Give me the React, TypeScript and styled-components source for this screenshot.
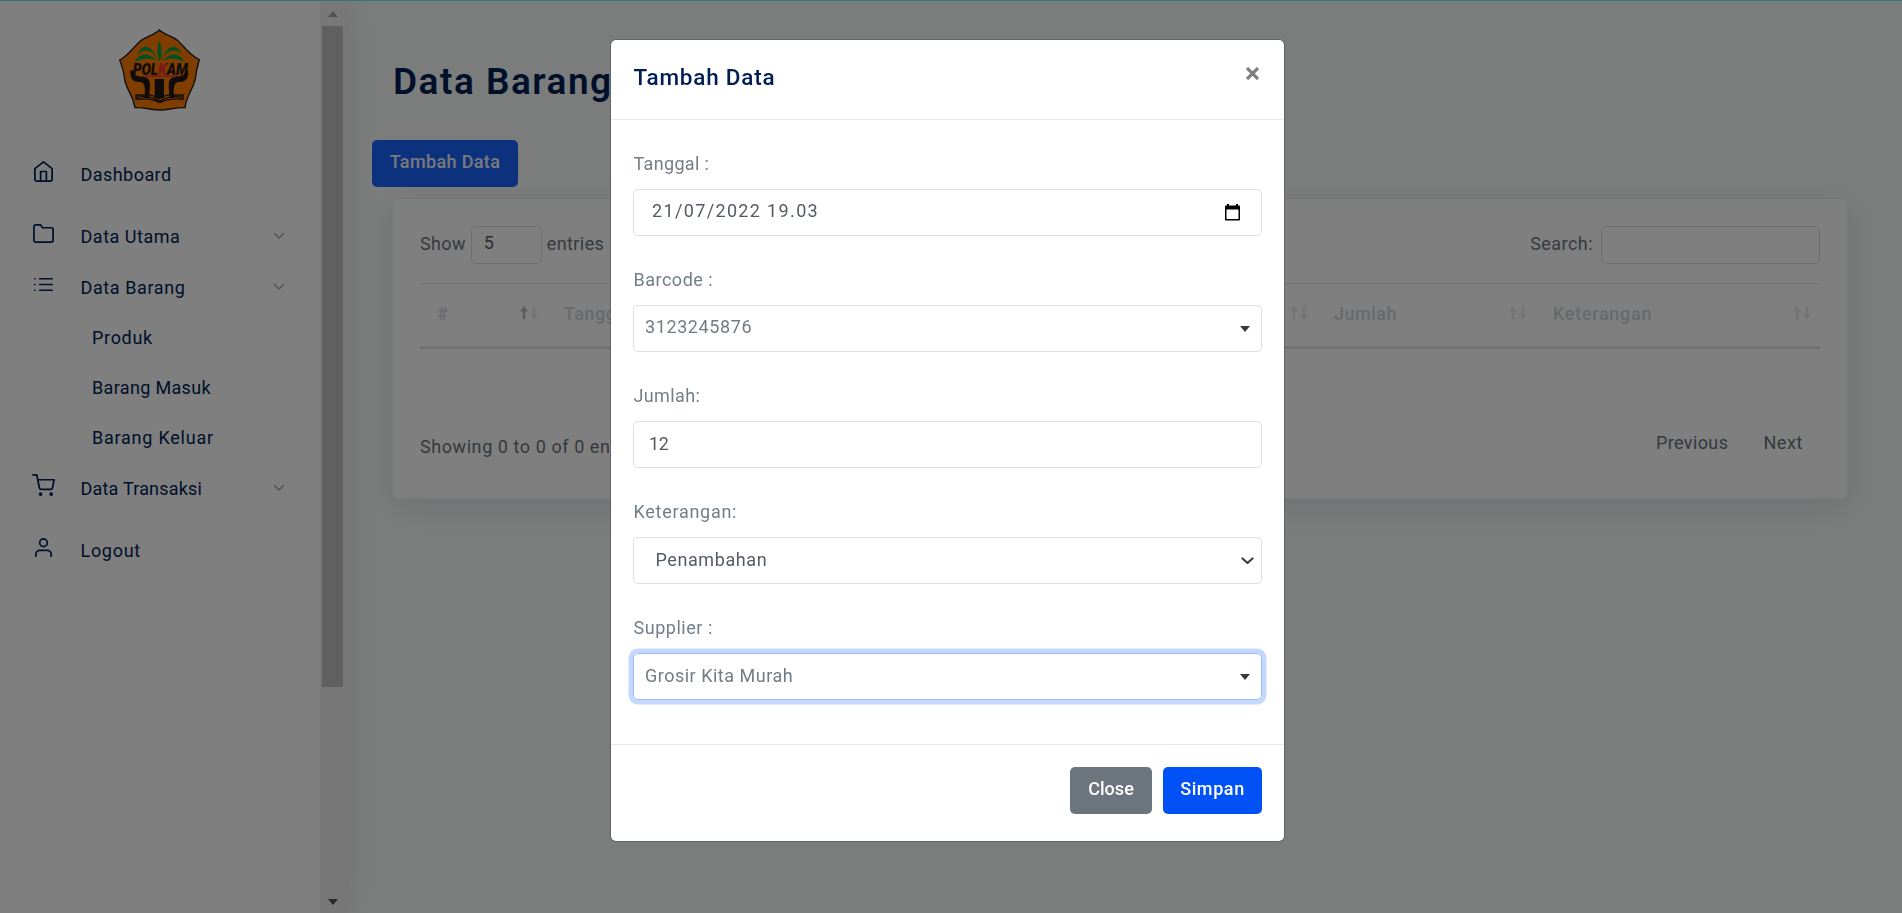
import React from 'react';
import styled, { createGlobalStyle, css } from 'styled-components';

const GlobalStyle = createGlobalStyle`
  *, *::before, *::after { box-sizing: border-box; }
  html, body { margin: 0; height: 100%; overflow: hidden; }
  body {
    font: 400 18px/24px Roboto, "Liberation Sans", sans-serif;
    color: #6c757d;
    background: #f7faf9;
  }
  h1, h2 { margin: 0; font-weight: 500; color: #001e54; }
  button { font: inherit; border: 0; padding: 0; background: none; }
`;

/* Text with its own letter spacing */
const Text = styled.span<{ $ls?: number }>`
  letter-spacing: ${p => p.$ls ?? 0.5}px;
  white-space: nowrap;
`;

const Page = styled.div`
  display: flex;
  height: 100vh;
  border-top: 1px solid #68f4fc;
`;

/* ---------- Sidebar ---------- */

const Sidebar = styled.aside`
  display: flex;
  flex: 0 0 346px;
  background: #fff;
  border-right: 1px solid #eaeaee;
  box-shadow: 0 0 32px rgba(25, 42, 70, 0.11);
`;

const SidebarBody = styled.div`
  flex: 1;
`;

const Brand = styled.div`
  height: 148px;
  padding: 28px 0 0 119px;
`;

const Nav = styled.nav`
  display: flex;
  flex-direction: column;
`;

const NavRow = styled.a<{ $gap?: boolean }>`
  display: flex;
  align-items: center;
  height: 51px;
  padding: 0 35px 0 32px;
  margin-bottom: ${p => (p.$gap ? 11 : 0)}px;
  color: #001e54;

  ${Text} { flex: 1; }
  > svg:first-child { margin: -6px 25.5px 0 0; }
`;

const SubRow = styled.a`
  display: flex;
  align-items: center;
  height: 50px;
  padding-left: 92px;
  color: #001e54;
`;

const LineSvg = styled.svg<{ $w?: number }>`
  display: block;
  flex: none;
  fill: none;
  stroke: currentColor;
  stroke-width: ${p => p.$w ?? 1.8};
  stroke-linecap: round;
  stroke-linejoin: round;
`;

const Chevron = styled(LineSvg)`
  color: #a3a8b0;
  margin-top: -2px;
`;

const Scrollbar = styled.div`
  display: flex;
  flex-direction: column;
  align-items: center;
  width: 25px;
  background: #f1f1f1;
`;

const ScrollArrow = styled.div<{ $down?: boolean }>`
  display: flex;
  justify-content: center;
  height: 25px;
  padding-top: ${p => (p.$down ? 11 : 10)}px;

  &::before {
    content: '';
    height: 6px;
    border: 5.5px solid transparent;
    ${p =>
      p.$down
        ? css`border-top: 6px solid #505050; border-bottom: 0;`
        : css`border-bottom: 6px solid #a3a3a3; border-top: 0;`}
  }
`;

const ScrollTrack = styled.div`
  flex: 1;
  &::before {
    content: '';
    display: block;
    width: 21px;
    height: 661px;
    background: #c1c1c1;
  }
`;

/* ---------- Main ---------- */

const Main = styled.main`
  flex: 1;
  padding: 57px 54px 0 47px;
`;

const Title = styled.h1`
  font-size: 37px;
  line-height: 48px;
  font-weight: 600;
`;

const Button = styled.button<{ $w: number; $bg: string }>`
  display: flex;
  justify-content: center;
  width: ${p => p.$w}px;
  height: 47px;
  padding-top: 10px;
  border-radius: 5px;
  background: ${p => p.$bg};
  color: #fff;
  font-weight: 500;
  line-height: 24px;
`;

const Toolbar = styled.div`
  margin: 34px 0 11px -21px;
  ${Button} { color: #f0f3fa; }
`;

const Card = styled.section`
  height: 301px;
  margin-left: -1px;
  padding: 27px 27px 0 27px;
  background: #fff;
  border: 1px solid #eef0f2;
  border-radius: 5px;
  box-shadow: 0 8px 32px rgba(25, 42, 70, 0.11);
`;

const Controls = styled.div`
  display: flex;
  align-items: center;
  justify-content: space-between;
  height: 37px;
`;

const Control = styled.label`
  display: flex;
  align-items: center;

  ${Text} { margin-top: -1px; }
`;

const Box = styled.span<{ $w: number }>`
  display: flex;
  align-items: center;
  width: ${p => p.$w}px;
  height: 38px;
  padding: 0 0 3px 12px;
  border: 1px solid #dcdde0;
  border-radius: 5px;
  color: #555d66;
`;

const HeadRow = styled.div`
  display: grid;
  grid-template-columns: 127px 770px 219px 1fr;
  height: 66px;
  margin-top: 20px;
  border-top: 1px solid #e2e4e8;
  border-bottom: 3px solid #dfe3e8;
`;

const HeadCell = styled.div`
  display: flex;
  justify-content: space-between;
  padding: 18px 9px 0 17px;
  color: #ced4da;
  font-weight: 500;
`;

const CardFooter = styled.div`
  display: flex;
  justify-content: space-between;
  margin-top: 82px;
  color: #69727a;
`;

const Info = styled.div`
  padding-top: 4px;
`;

const Pager = styled.div`
  display: flex;
  gap: 35px;
  padding-right: 17px;
`;

/* ---------- Modal ---------- */

const Backdrop = styled.div`
  position: fixed;
  inset: 0;
  display: flex;
  justify-content: center;
  align-items: flex-start;
  padding: 39px 7px 0 0;
  background: rgba(0, 0, 0, 0.5);
`;

const Dialog = styled.div`
  display: flex;
  flex-direction: column;
  width: 675px;
  height: 803px;
  background: #fff;
  background-clip: padding-box;
  border: 1px solid rgba(0, 0, 0, 0.2);
  border-radius: 6px;
`;

const DialogHeader = styled.header`
  display: flex;
  justify-content: space-between;
  height: 80px;
  padding: 25px 25px 0 22.5px;
  border-bottom: 1px solid #e6e8ea;
  color: #7f7f7f;
`;

const DialogTitle = styled.h2`
  font-size: 22.5px;
  line-height: 24px;
`;

const DialogBody = styled.div`
  flex: 1;
  padding: 32px 22px 0;
`;

const Field = styled.div`
  height: 116px;
`;

const Label = styled.label`
  display: block;
  height: 37px;
  padding-left: 0.5px;
  color: #737d87;
`;

const Input = styled.div<{ $left: number; $right: number; $lift?: number; $muted?: boolean; $focus?: boolean }>`
  display: flex;
  align-items: center;
  justify-content: space-between;
  height: 47px;
  padding: 0 ${p => p.$right}px 0 ${p => p.$left}px;
  border: 1px solid ${p => (p.$focus ? '#99b9fb' : '#dee0e3')};
  border-radius: 5px;
  box-shadow: ${p => (p.$focus ? '0 0 0 4.5px #c5d8fd' : 'none')};
  color: ${p => (p.$muted ? '#737c85' : '#555b62')};

  ${Text} { margin-top: -${p => p.$lift ?? 2}px; }
`;

const Caret = styled.i`
  border: 5.5px solid transparent;
  border-top: 6px solid #343a40;
  border-bottom: 0;
  margin-top: 1px;
`;

const DialogFooter = styled.footer`
  display: flex;
  justify-content: flex-end;
  gap: 11px;
  height: 97px;
  padding: 22px 22px 0;
  border-top: 1px solid #e3e8ee;
`;

/* ---------- Icons ---------- */

const navIcons = {
  home: <><path d="M3 9l9-7 9 7v11a2 2 0 0 1-2 2H5a2 2 0 0 1-2-2z" /><path d="M9 22V12h6v10" /></>,
  folder: <path d="M22 19a2 2 0 0 1-2 2H4a2 2 0 0 1-2-2V5a2 2 0 0 1 2-2h5l2 3h9a2 2 0 0 1 2 2z" />,
  list: <path d="M8 6h13M8 12h13M8 18h13M3 6h.01M3 12h.01M3 18h.01" />,
  cart: <><circle cx="9" cy="21" r="1" /><circle cx="20" cy="21" r="1" /><path d="M1 1h4l2.68 13.39a2 2 0 0 0 2 1.61h9.72a2 2 0 0 0 2-1.61L23 6H6" /></>,
  user: <><path d="M20 21v-2a4 4 0 0 0-4-4H8a4 4 0 0 0-4 4v2" /><circle cx="12" cy="7" r="4" /></>,
};

const NavIcon = ({ name }: { name: keyof typeof navIcons }) => (
  <LineSvg width="23" height="23" viewBox="0 0 24 24">{navIcons[name]}</LineSvg>
);

const Down = () => (
  <Chevron $w={1.5} width="12" height="8" viewBox="0 0 12 8"><path d="M1.500 1.500 6 6l4.500-4.500" /></Chevron>
);

const SortSvg = styled.svg`
  margin-top: 4px;
`;

const SortIcon = ({ asc }: { asc?: boolean }) => (
  <SortSvg width="18" height="14" viewBox="0 0 18 14">
    <path d="M4 0 8 5.500H5.200V13H2.800V5.500H0z" fill={asc ? '#b4b9be' : '#e5e6e7'} />
    <path d="M14 13.500 10 8h2.800V.5h2.400V8H18z" fill="#e5e6e7" />
  </SortSvg>
);

const CalendarIcon = () => (
  <svg width="15" height="17" viewBox="0 0 15 17">
    <path d="M2 0h2v1.500h7V0h2v1.500h1.200a.8.8 0 0 1 .8.8V15.700a.8.8 0 0 1-.8.8H.8a.8.8 0 0 1-.8-.8V2.300a.8.8 0 0 1 .8-.8H2zM1.500 5.500V15h12V5.500z" fill="#000" fillRule="evenodd" />
  </svg>
);

const Wordmark = styled.text`
  font: italic 900 50px Roboto, sans-serif;
`;

const Logo = () => (
  <svg width="81" height="82" viewBox="57 28 243 246">
    <defs>
      {/* The K of the wordmark is red, the rest near-black */}
      <linearGradient id="wordmark" gradientUnits="userSpaceOnUse" x1="98" x2="264" y1="150" y2="150">
        <stop offset="0.44" stopColor="#1c1614" />
        <stop offset="0.44" stopColor="#ef2f2f" />
        <stop offset="0.62" stopColor="#ef2f2f" />
        <stop offset="0.62" stopColor="#1c1614" />
      </linearGradient>
    </defs>
    <path
      d="M178 31C196 47 221 51 237 66C253 83 274 111 298 120C293 140 289 150 287 171C283 207 261 220 255 264C229 262 207 271 180 271C151 271 132 262 105 264C97 219 77 210 73 173C71 153 66 139 59 121C83 110 101 82 119 66C136 51 162 47 178 31Z"
      fill="#ff7a00" stroke="#241c1c" strokeWidth="4"
    />
    <g fill="#00a045">
      <path d="M178 62C187 88 187 106 179 126C171 106 170 88 178 62Z" />
      <path d="M174 123C158 82 132 63 112 105C135 83 157 92 174 123Z" />
      <path d="M183 123C199 82 226 63 246 105C223 83 201 92 183 123Z" />
      <path d="M172 126C148 97 121 98 104 127C130 115 154 111 172 126Z" />
      <path d="M186 126C210 97 237 98 254 127C228 115 204 111 186 126Z" />
    </g>
    <Wordmark x="98" y="165" fill="url(#wordmark)" textLength="166" lengthAdjust="spacingAndGlyphs">POLKAM</Wordmark>
    <path d="M127 170H240" stroke="#d42a2a" strokeWidth="4" strokeDasharray="7 2" />
    <g fill="#1c1614">
      <path d="M164 178h28v58h-28zM91 153C90 178 99 187 121 187C137 188 135 209 134 235H147C149 203 155 180 139 174C121 169 100 174 99 151Z" />
      <path d="M265 153C266 178 257 187 235 187C219 188 221 209 222 235H209C207 203 201 180 217 174C235 169 256 174 257 151Z" />
    </g>
    <path d="M108 226C132 228 154 219 178 238C202 219 224 228 249 226V239C225 236 205 236 180 249C153 235 136 237 108 239ZM108 233C138 229 155 230 179 245C204 229 222 229 249 233" fill="none" stroke="#1c1614" strokeWidth="4" />
  </svg>
);

const CloseSvg = styled(LineSvg)`
  margin-top: 1.5px;
  stroke-linecap: butt;
`;

const CloseIcon = () => (
  <CloseSvg $w={3.2} width="13" height="13" viewBox="0 0 13 13">
    <path d="M1 1l11 11M12 1 1 12" />
  </CloseSvg>
);

const SelectSvg = styled(LineSvg)`
  color: #3d434a;
`;

const SelectArrow = () => (
  <SelectSvg $w={2.3} width="13" height="8" viewBox="0 0 13 8">
    <path d="M1.500 1.500l5 4.500 5-4.500" />
  </SelectSvg>
);

const ShowControl = styled(Control)`
  gap: 5px;
`;

const SearchControl = styled(Control)`
  gap: 8px;
`;

export default function App() {
  return (
    <>
      <GlobalStyle />
      <Page>
        <Sidebar>
          <SidebarBody>
            <Brand><Logo /></Brand>
            <Nav>
              <NavRow $gap><NavIcon name="home" /><Text $ls={0.45}>Dashboard</Text></NavRow>
              <NavRow><NavIcon name="folder" /><Text $ls={0.52}>Data Utama</Text><Down /></NavRow>
              <NavRow><NavIcon name="list" /><Text $ls={0.6}>Data Barang</Text><Down /></NavRow>
              <SubRow><Text $ls={0.68}>Produk</Text></SubRow>
              <SubRow><Text $ls={0.34}>Barang Masuk</Text></SubRow>
              <SubRow><Text $ls={0.77}>Barang Keluar</Text></SubRow>
              <NavRow $gap><NavIcon name="cart" /><Text $ls={0.2}>Data Transaksi</Text><Down /></NavRow>
              <NavRow><NavIcon name="user" /><Text $ls={0.7}>Logout</Text></NavRow>
            </Nav>
          </SidebarBody>
          <Scrollbar>
            <ScrollArrow />
            <ScrollTrack />
            <ScrollArrow $down />
          </Scrollbar>
        </Sidebar>

        <Main>
          <Title><Text $ls={1.5}>Data Barang</Text></Title>
          <Toolbar>
            <Button $w={146} $bg="#1b64fa"><Text $ls={0.36}>Tambah Data</Text></Button>
          </Toolbar>
          <Card>
            <Controls>
              <ShowControl>
                <Text $ls={0.35}>Show</Text>
                <Box $w={71}>5</Box>
                <Text $ls={0.4}>entries</Text>
              </ShowControl>
              <SearchControl>
                <Text $ls={0.45}>Search:</Text>
                <Box $w={219} />
              </SearchControl>
            </Controls>
            <HeadRow>
              <HeadCell><Text>#</Text><SortIcon asc /></HeadCell>
              <HeadCell><Text>Tanggal</Text><SortIcon /></HeadCell>
              <HeadCell><Text $ls={0.5}>Jumlah</Text><SortIcon /></HeadCell>
              <HeadCell><Text $ls={0.7}>Keterangan</Text><SortIcon /></HeadCell>
            </HeadRow>
            <CardFooter>
              <Info><Text $ls={0.57}>Showing 0 to 0 of 0 entries</Text></Info>
              <Pager>
                <Text $ls={0.4}>Previous</Text>
                <Text $ls={0.6}>Next</Text>
              </Pager>
            </CardFooter>
          </Card>
        </Main>
      </Page>

      <Backdrop>
        <Dialog>
          <DialogHeader>
            <DialogTitle><Text $ls={0.78}>Tambah Data</Text></DialogTitle>
            <CloseIcon />
          </DialogHeader>
          <DialogBody>
            <Field>
              <Label><Text $ls={0.33}>Tanggal :</Text></Label>
              <Input $left={18} $right={21} $lift={4}><Text $ls={1.35}>21/07/2022 19.03</Text><CalendarIcon /></Input>
            </Field>
            <Field>
              <Label><Text $ls={0.5}>Barcode :</Text></Label>
              <Input $left={11} $right={11} $lift={4} $muted><Text $ls={0.6}>3123245876</Text><Caret /></Input>
            </Field>
            <Field>
              <Label><Text $ls={0.38}>Jumlah:</Text></Label>
              <Input $left={15} $right={11}><Text $ls={-0.4}>12</Text></Input>
            </Field>
            <Field>
              <Label><Text $ls={0.72}>Keterangan:</Text></Label>
              <Input $left={21.5} $right={7}><Text $ls={0.58}>Penambahan</Text><SelectArrow /></Input>
            </Field>
            <Field>
              <Label><Text $ls={0.53}>Supplier :</Text></Label>
              <Input $left={11} $right={11} $muted $focus><Text $ls={0.5}>Grosir Kita Murah</Text><Caret /></Input>
            </Field>
          </DialogBody>
          <DialogFooter>
            <Button $w={82} $bg="#6c757d"><Text $ls={0.05}>Close</Text></Button>
            <Button $w={99} $bg="#0052f7"><Text $ls={0.6}>Simpan</Text></Button>
          </DialogFooter>
        </Dialog>
      </Backdrop>
    </>
  );
}
